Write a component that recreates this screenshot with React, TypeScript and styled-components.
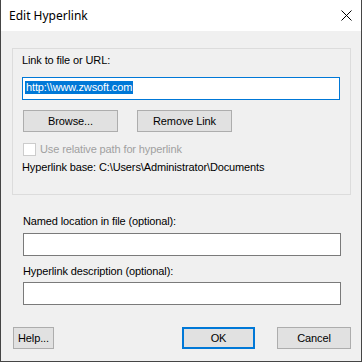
import React from 'react';
import styled, { createGlobalStyle } from 'styled-components';

const GlobalStyle = createGlobalStyle`
  html, body {
    margin: 0;
    padding: 0;
    background: #f0f0f0;
  }
  * {
    box-sizing: border-box;
  }
`;

const Window = styled.div`
  width: 362px;
  height: 362px;
  display: flex;
  flex-direction: column;
  border: 1px solid #454545;
  border-top: none;
  background: #f0f0f0;
  font-family: 'Liberation Sans', Arial, sans-serif;
  font-size: 11px;
  letter-spacing: -0.12px;
  color: #000;
`;

const TitleBar = styled.div`
  height: 31px;
  flex: none;
  display: flex;
  align-items: center;
  justify-content: space-between;
  background: #ffffff;
  padding: 0 9px 1px 8px;
`;

const Title = styled.span`
  font-family: 'Noto Sans', 'Open Sans', sans-serif;
  font-size: 12px;
  letter-spacing: 0;
  color: #000;
`;

const CloseIcon = styled.svg`
  width: 11px;
  height: 11px;
`;

const Body = styled.div`
  flex: 1;
  display: flex;
  flex-direction: column;
  padding: 17px 10px 0 11px;
`;

const GroupBox = styled.div`
  width: 339px;
  height: 147px;
  border: 1px solid #dcdcdc;
  padding: 5px 10px 0 9px;
  display: flex;
  flex-direction: column;
`;

const Label = styled.div<{ $disabled?: boolean }>`
  height: 13px;
  line-height: 13px;
  white-space: nowrap;
  color: ${p => (p.$disabled ? '#a0a0a0' : '#000')};
`;

const TextBox = styled.div<{ $focused?: boolean }>`
  width: 318px;
  height: 23px;
  background: #fff;
  border: 1px solid ${p => (p.$focused ? '#0078d7' : '#7a7a7a')};
  padding: 3px 0 0 2px;
  display: flex;
  align-items: flex-start;
`;

const Selected = styled.span`
  background: #0078d7;
  color: #fff;
  height: 13px;
  line-height: 13px;
  padding: 0 1px;
`;

const ButtonRow = styled.div`
  display: flex;
  gap: 19px;
  margin-top: 10px;
  padding-left: 1px;
`;

const Button = styled.button<{ $w: number; $default?: boolean }>`
  width: ${p => p.$w}px;
  height: 22px;
  padding: 0;
  margin: 0;
  background: #e1e1e1;
  border: ${p => (p.$default ? '2px solid #0078d7' : '1px solid #adadad')};
  font-family: 'Liberation Sans', Arial, sans-serif;
  font-size: 11px;
  letter-spacing: -0.12px;
  color: #000;
  cursor: default;
`;

const CheckRow = styled.div`
  display: flex;
  align-items: center;
  gap: 4px;
  margin-top: 11px;
  padding-left: 1px;
  height: 13px;
`;

const CheckBox = styled.span`
  width: 13px;
  height: 13px;
  border: 1px solid #cccccc;
  background: #ffffff;
  flex: none;
`;

const Section = styled.div`
  display: flex;
  flex-direction: column;
  padding-left: 11px;
`;

const Footer = styled.div`
  display: flex;
  align-items: center;
  margin-top: auto;
  margin-bottom: 12px;
  padding-left: 1px;
`;

const Spacer = styled.div`
  flex: 1;
`;

const FooterRight = styled.div`
  display: flex;
  gap: 22px;
`;

export default function App() {
  return (
    <>
      <GlobalStyle />
      <Window>
        <TitleBar>
          <Title>Edit Hyperlink</Title>
          <CloseIcon viewBox="0 0 11 11">
            <path d="M0.5 0.5 L10.5 10.5 M10.5 0.5 L0.5 10.5" stroke="#000" strokeWidth="1" fill="none" />
          </CloseIcon>
        </TitleBar>
        <Body>
          <GroupBox>
            <Label>Link to file or URL:</Label>
            <TextBox $focused style={{ marginTop: 10 }}>
              <Selected>http:\\www.zwsoft.com</Selected>
            </TextBox>
            <ButtonRow>
              <Button $w={95}>Browse...</Button>
              <Button $w={95}>Remove Link</Button>
            </ButtonRow>
            <CheckRow>
              <CheckBox />
              <Label $disabled>Use relative path for hyperlink</Label>
            </CheckRow>
            <Label style={{ marginTop: 5 }}>Hyperlink base: C:\Users\Administrator\Documents</Label>
          </GroupBox>
          <Section>
            <Label style={{ marginTop: 20 }}>Named location in file (optional):</Label>
            <TextBox style={{ marginTop: 5 }} />
            <Label style={{ marginTop: 9 }}>Hyperlink description (optional):</Label>
            <TextBox style={{ marginTop: 4 }} />
          </Section>
          <Footer>
            <Button $w={41}>Help...</Button>
            <Spacer />
            <FooterRight>
              <Button $w={73} $default>OK</Button>
              <Button $w={74}>Cancel</Button>
            </FooterRight>
          </Footer>
        </Body>
      </Window>
    </>
  );
}
